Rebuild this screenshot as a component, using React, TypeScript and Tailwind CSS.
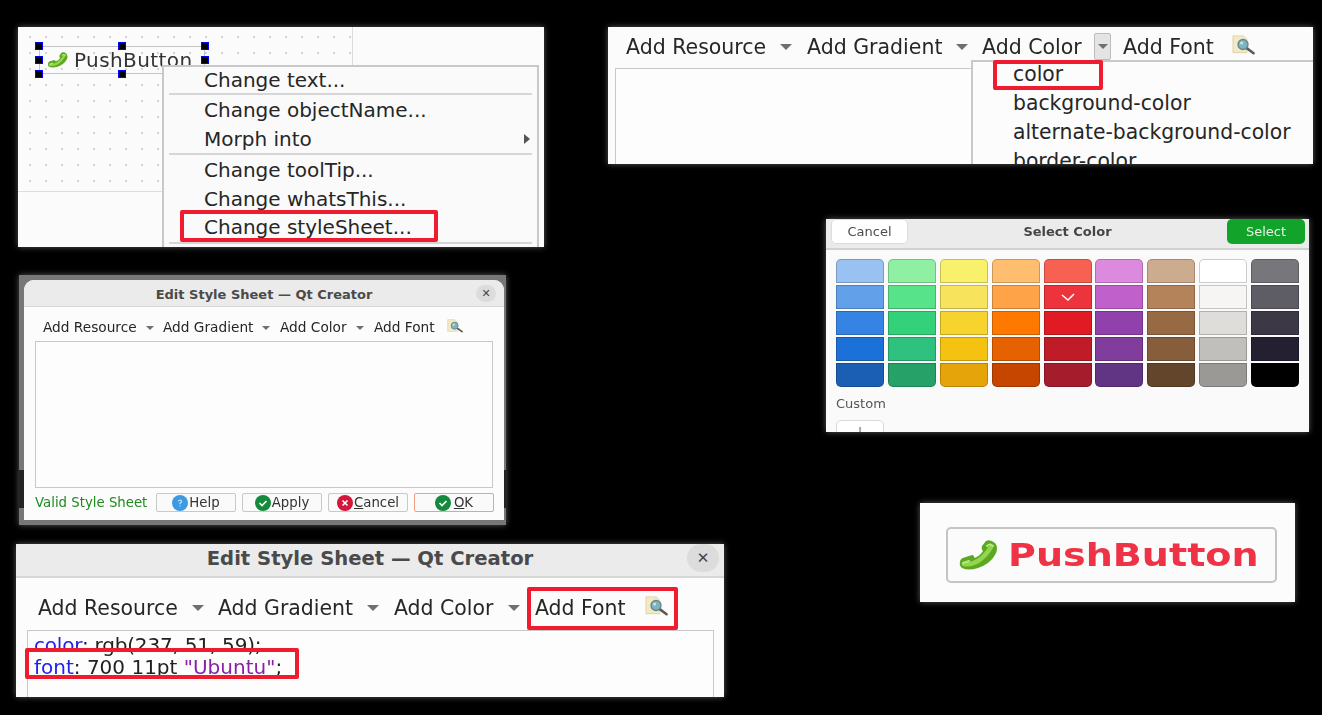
import { FC, ReactNode } from "react"

const uiFont = "font-['DejaVu_Sans','Noto_Sans',sans-serif]"

const palette = [
  ["#99c1f1", "#62a0ea", "#3584e4", "#1c71d8", "#1a5fb4"],
  ["#8ff0a4", "#57e389", "#33d17a", "#2ec27e", "#26a269"],
  ["#f9f06b", "#f8e45c", "#f6d32d", "#f5c211", "#e5a50a"],
  ["#ffbe6f", "#ffa348", "#ff7800", "#e66100", "#c64600"],
  ["#f66151", "#ed333b", "#e01b24", "#c01c28", "#a51d2d"],
  ["#dc8add", "#c061cb", "#9141ac", "#813d9c", "#613583"],
  ["#cdab8f", "#b5835a", "#986a44", "#865e3c", "#63452c"],
  ["#ffffff", "#f6f5f4", "#deddda", "#c0bfbc", "#9a9996"],
  ["#77767b", "#5e5c64", "#3d3846", "#241f31", "#000000"],
]

const Phone: FC<{ className: string }> = ({ className }) => (
  <svg viewBox="0 0 40 30" className={className}>
    <path
      d="M2 22 Q2 18 8 17 L14 15 Q16 15 16.5 18 Q22 16 25 11 Q23 9 24 6 L28 1 Q32 -1 37 3 Q41 8 37 15 Q32 24 20 28 Q10 31 4 28 Q1 26 2 22Z"
      fill="#5da822"
    />
    <path d="M6 24 Q21 26 33 7" fill="none" stroke="#93d64d" strokeWidth="4.5" strokeLinecap="round" />
    <path d="M5 23 L11 21 M29 6 Q32 3 35 6" fill="none" stroke="#b6e97c" strokeWidth="2" strokeLinecap="round" />
  </svg>
)

const Lens: FC<{ className: string }> = ({ className }) => (
  <svg viewBox="0 0 24 20" className={className}>
    <path d="M1 0.5 H12 L15.5 4 V18 H1Z" fill="#f3e9c4" stroke="#d8cba0" strokeWidth="0.8" />
    <path d="M15 13 L22.5 18.5" stroke="#5a5a50" strokeWidth="2.6" strokeLinecap="round" />
    <circle cx="11.5" cy="9.5" r="5.2" fill="#7fb3c0" stroke="#64858f" strokeWidth="1.4" />
    <circle cx="10" cy="8" r="1.6" fill="#c8e6ea" />
  </svg>
)

const Arrow: FC<{ className: string }> = ({ className }) => (
  <svg viewBox="0 0 10 5" className={className}>
    <polygon points="0,0 10,0 5,5" fill="#6f6f6f" />
  </svg>
)

const DialogIcon: FC<{ color: string; kind: "check" | "x" | "help" }> = ({ color, kind }) => (
  <svg viewBox="0 0 16 16" className="w-4 h-4 shrink-0">
    <circle cx="8" cy="8" r="8" fill={color} />
    {kind === "check" && <path d="M4.5 8 L7 10.5 L11.5 6" fill="none" stroke="white" strokeWidth="1.6" />}
    {kind === "x" && <path d="M5.5 5.5 L10.5 10.5 M10.5 5.5 L5.5 10.5" stroke="white" strokeWidth="1.6" />}
    {kind === "help" && <path d="M6.5 6.5 Q6.5 5 8 5 Q9.6 5 9.6 6.4 Q9.6 7.3 8 8.2 V9.2 M8 10.6 V11.6" fill="none" stroke="#cfe8fb" strokeWidth="1.1" />}
  </svg>
)

const Panel: FC<{ className: string; children: ReactNode }> = ({ className, children }) => (
  <div className={`absolute overflow-hidden blur-[0.4px] shadow-[0_0_6px_rgba(255,255,255,0.35)] ${uiFont} ${className}`}>
    {children}
  </div>
)

const Handle: FC<{ className: string }> = ({ className }) => (
  <div className={`absolute w-2 h-2 bg-black border border-[#0000ff] ${className}`} />
)

const DesignerPanel = () => (
  <Panel className="left-[18px] top-[27px] w-[526px] h-[220px] bg-[#fbfbfb]">
    <div className="w-[335px] h-[165px] border-r border-b border-[#dcdcdc] bg-[radial-gradient(#d4d4d4_1px,transparent_1.2px)] bg-[size:16px_16px] bg-[position:4px_2px] pt-[19px] pl-[21px]">
      <div className="relative w-[166px] h-[28px] border border-[#c4c4c4] flex items-center pl-[7px] gap-[6px] text-[#333] text-[20px] tracking-[0.4px]">
        <Phone className="w-[21px] h-[16px]" />
        <span>PushButton</span>
        <Handle className="-left-[5px] -top-[5px]" />
        <Handle className="left-[78px] -top-[5px]" />
        <Handle className="-right-[5px] -top-[5px]" />
        <Handle className="-left-[5px] top-[9px]" />
        <Handle className="-right-[5px] top-[9px]" />
        <Handle className="-left-[5px] -bottom-[5px]" />
        <Handle className="left-[78px] -bottom-[5px]" />
      </div>
    </div>

    <div className="absolute left-[144px] top-[38px] w-[377px] h-[190px] bg-[#fafafa] border-2 border-[#c8c8c8] text-[20px] text-[#262626] pl-[40px] leading-none">
      <div className="h-[25px] flex items-center">Change text...</div>
      <div className="h-[2px] mt-[1px] -ml-[35px] mr-[5px] bg-[#d6d6d6]" />
      <div className="h-[30px] flex items-center">Change objectName...</div>
      <div className="relative h-[28px] flex items-center">
        Morph into
        <div className="absolute right-[7px] top-[9px] w-0 h-0 border-y-[5px] border-y-transparent border-l-[6px] border-l-[#555]" />
      </div>
      <div className="h-[2px] -ml-[35px] mr-[5px] bg-[#d6d6d6]" />
      <div className="h-[30px] flex items-center">Change toolTip...</div>
      <div className="h-[27px] flex items-center">Change whatsThis...</div>
      <div className="h-[30px] flex items-center">Change styleSheet...</div>
      <div className="h-[2px] -ml-[35px] mr-[5px] bg-[#d6d6d6]" />
    </div>
    <div className="absolute left-[162px] top-[183px] w-[258px] h-[32px] border-[4px] border-[#ee1c2e] rounded-[2px]" />
  </Panel>
)

const ColorMenuPanel = () => (
  <Panel className="left-[608px] top-[27px] w-[705px] h-[137px] bg-[#fbfbfb]">
    <div className="flex items-center h-[40px] pl-[18px] text-[20.5px] text-[#262626] whitespace-nowrap">
      <span className="w-[140px]">Add Resource</span>
      <Arrow className="ml-[14px] w-[12px] h-[6px]" />
      <span className="ml-[15px] w-[135px]">Add Gradient</span>
      <Arrow className="ml-[14px] w-[12px] h-[6px]" />
      <span className="ml-[14px] w-[101px]">Add Color</span>
      <div className="ml-[11px] w-[17px] h-[27px] mt-[-1px] bg-[#e4e4e4] border border-[#bdbdbd] rounded-[2px] flex items-center justify-center">
        <Arrow className="w-[10px] h-[5px]" />
      </div>
      <span className="ml-[12px] w-[93px]">Add Font</span>
      <Lens className="ml-[16px] w-[23px] h-[20px] -mt-[4px]" />
    </div>
    <div className="ml-[7px] mt-[1px] h-[100px] border border-[#c8c8c8] bg-[#fdfdfd]" />

    <div className="absolute left-[363px] top-[33px] w-[360px] h-[120px] bg-[#fcfcfc] border-l-2 border-t-2 border-[#c9c9c9] pl-[40px] text-[20.35px] text-[#262626] whitespace-nowrap">
      <div className="h-[29px] leading-[25px]">color</div>
      <div className="h-[29px] leading-[25px]">background-color</div>
      <div className="h-[29px] leading-[25px]">alternate-background-color</div>
      <div className="h-[29px] leading-[25px]">border-color</div>
    </div>
    <div className="absolute left-[385px] top-[33px] w-[110px] h-[30px] border-[4px] border-[#ee1c2e] rounded-[2px]" />
  </Panel>
)

const SelectColorPanel = () => (
  <Panel className="left-[826px] top-[219px] w-[483px] h-[213px] bg-[#fafafa]">
    <div className="relative flex items-start justify-between h-[31px] bg-[#ebebeb] border-b-2 border-[#d0d0d0] pl-[5px] pr-[4px] text-[13px]">
      <div className="w-[77px] h-[25px] rounded-[5px] bg-white border border-[#dcdcdc] flex items-center justify-center text-[#4c4c4c]">
        Cancel
      </div>
      <span className="absolute left-0 right-0 text-center top-[3px] font-bold text-[#454545]">Select Color</span>
      <div className="w-[78px] h-[25px] rounded-[5px] bg-[#12a32a] flex items-center justify-center text-[#e6f5e6]">
        Select
      </div>
    </div>

    <div className="flex gap-[3.9px] pl-[10px] pt-[9px]">
      {palette.map((col, i) => (
        <div key={i} className="flex flex-col gap-[2px]">
          {col.map((c, j) => (
            <div
              key={j}
              style={{ backgroundColor: c }}
              className={`relative w-[48px] h-[24px] border border-black/20 flex items-center justify-center ${j === 0 ? "rounded-t-[5px]" : ""} ${j === 4 ? "rounded-b-[5px]" : ""}`}
            >
              {c === "#ed333b" && (
                <svg viewBox="0 0 14 8" className="w-[14px] h-[8px]">
                  <path d="M1 2 L7 7 L13 1" fill="none" stroke="white" strokeWidth="1.5" />
                </svg>
              )}
            </div>
          ))}
        </div>
      ))}
    </div>

    <div className="pl-[10px] mt-[7px] text-[13px] text-[#555]">Custom</div>
    <div className="ml-[10px] mt-[6px] w-[48px] h-[30px] bg-white border border-[#d8d8d8] rounded-[5px] flex justify-center">
      <span className="text-[18px] leading-[22px] font-light text-[#444]">+</span>
    </div>
  </Panel>
)

const DialogButton: FC<{ className?: string; children: ReactNode }> = ({ className = "border-[#c9c9c9]", children }) => (
  <div className={`w-[80px] h-[19px] flex items-center justify-center gap-[1px] bg-[#fafafa] border rounded-[2px] ${className}`}>
    {children}
  </div>
)

const EditDialogPanel = () => (
  <Panel className="left-[19px] top-[275px] w-[487px] h-[250px] bg-[#777]">
    {/* the dark strip of the window behind the dialog */}
    <div className="absolute left-0 right-0 top-[195px] h-[38px] bg-[#232323]" />
    <div className="relative ml-[5px] mr-[2px] mt-[5px] h-[240px] bg-[#fcfcfc] rounded-t-[10px] overflow-hidden">
      <div className="relative flex items-center justify-center h-[27px] pt-[3px] bg-[#ebebeb] border-b border-[#d6d6d6] text-[13px] font-bold text-[#4a4a4a]">
        Edit Style Sheet — Qt Creator
        <div className="absolute right-[8px] top-[5px] w-[20px] h-[17px] rounded-full bg-[#dcdcdc] flex items-center justify-center text-[11px] leading-none font-normal text-[#444]">
          ✕
        </div>
      </div>

      <div className="flex items-center h-[34px] pt-[7px] pl-[19px] text-[13.7px] text-[#262626] whitespace-nowrap">
        <span className="w-[93px]">Add Resource</span>
        <Arrow className="ml-[10px] w-[8px] h-[4px]" />
        <span className="ml-[9px] w-[90px]">Add Gradient</span>
        <Arrow className="ml-[9px] w-[8px] h-[4px]" />
        <span className="ml-[10px] w-[67px]">Add Color</span>
        <Arrow className="ml-[9px] w-[8px] h-[4px]" />
        <span className="ml-[10px] w-[62px]">Add Font</span>
        <Lens className="ml-[11px] w-[16px] h-[14px] -mt-[3px]" />
      </div>

      <div className="ml-[11px] w-[458px] h-[147px] bg-[#fdfdfd] border border-[#c8c8c8]" />

      <div className="flex items-center gap-[6px] ml-[11px] mt-[5px] text-[13.3px] text-[#333]">
        <span className="w-[115px] text-[#1f8a1f] whitespace-nowrap">Valid Style Sheet</span>
        <DialogButton>
          <DialogIcon color="#3b9ae1" kind="help" />
          <span>Help</span>
        </DialogButton>
        <DialogButton>
          <DialogIcon color="#148a3c" kind="check" />
          <span>Apply</span>
        </DialogButton>
        <DialogButton>
          <DialogIcon color="#d4163a" kind="x" />
          <span><span className="underline">C</span>ancel</span>
        </DialogButton>
        <DialogButton className="border-[#f0a080]">
          <DialogIcon color="#148a3c" kind="check" />
          <span className="ml-[2px]"><span className="underline">O</span>K</span>
        </DialogButton>
      </div>
    </div>
  </Panel>
)

const FontDialogPanel = () => (
  <Panel className="left-[16px] top-[544px] w-[708px] h-[153px] bg-[#fcfcfc]">
    <div className="relative flex items-center justify-center h-[34px] pb-[2px] bg-[#ebebeb] border-b-2 border-[#d6d6d6] text-[19.6px] font-bold text-[#4a4a4a]">
      Edit Style Sheet — Qt Creator
      <div className="absolute right-[5px] top-[0px] w-[32px] h-[28px] rounded-full bg-[#dcdcdc] flex items-center justify-center text-[15px] leading-none font-normal text-[#444]">
        ✕
      </div>
    </div>

    <div className="flex items-center h-[52px] pt-[8px] pl-[22px] text-[20.45px] text-[#262626] whitespace-nowrap">
      <span className="w-[140px]">Add Resource</span>
      <Arrow className="ml-[14px] w-[12px] h-[6px]" />
      <span className="ml-[14px] w-[135px]">Add Gradient</span>
      <Arrow className="ml-[14px] w-[12px] h-[6px]" />
      <span className="ml-[15px] w-[100px]">Add Color</span>
      <Arrow className="ml-[14px] w-[12px] h-[6px]" />
      <span className="ml-[15px] w-[92px]">Add Font</span>
      <Lens className="ml-[18px] w-[23px] h-[20px] -mt-[4px]" />
    </div>

    <div className="ml-[11px] mr-[10px] h-[80px] bg-[#fdfdfd] border border-[#c8c8c8] pl-[6px] pt-[3px] text-[20px] leading-[22px] text-[#222]">
      <div className="whitespace-nowrap tracking-[-0.2px]"><span className="text-[#2222ee]">color</span>: rgb(237, 51, 59);</div>
      <div className="whitespace-nowrap">
        <span className="text-[#2222ee]">font</span>: 700 11pt <span className="text-[#8a1fa8]">"Ubuntu"</span>;
      </div>
    </div>

    <div className="absolute left-[511px] top-[43px] w-[151px] h-[43px] border-[4px] border-[#ee1c2e] rounded-[2px]" />
    <div className="absolute left-[9px] top-[104px] w-[274px] h-[31px] border-[4px] border-[#ee1c2e] rounded-[2px]" />
  </Panel>
)

const ResultPanel = () => (
  <Panel className="left-[920px] top-[503px] w-[375px] h-[99px] bg-[#fcfcfc]">
    <div className="ml-[26px] mt-[24px] w-[331px] h-[56px] border-2 border-[#c4c4c4] rounded-[5px] flex items-center pl-[10px] gap-[10px] bg-[#fbfbfb]">
      <Phone className="w-[40px] h-[30px]" />
      <span className="origin-left scale-x-[1.19] text-[32px] font-bold text-[#ee3346] leading-none">PushButton</span>
    </div>
  </Panel>
)

export default function App() {
  return (
    <div className="relative w-[1322px] h-[715px] bg-black overflow-hidden">
      <DesignerPanel />
      <ColorMenuPanel />
      <SelectColorPanel />
      <EditDialogPanel />
      <FontDialogPanel />
      <ResultPanel />
    </div>
  )
}
